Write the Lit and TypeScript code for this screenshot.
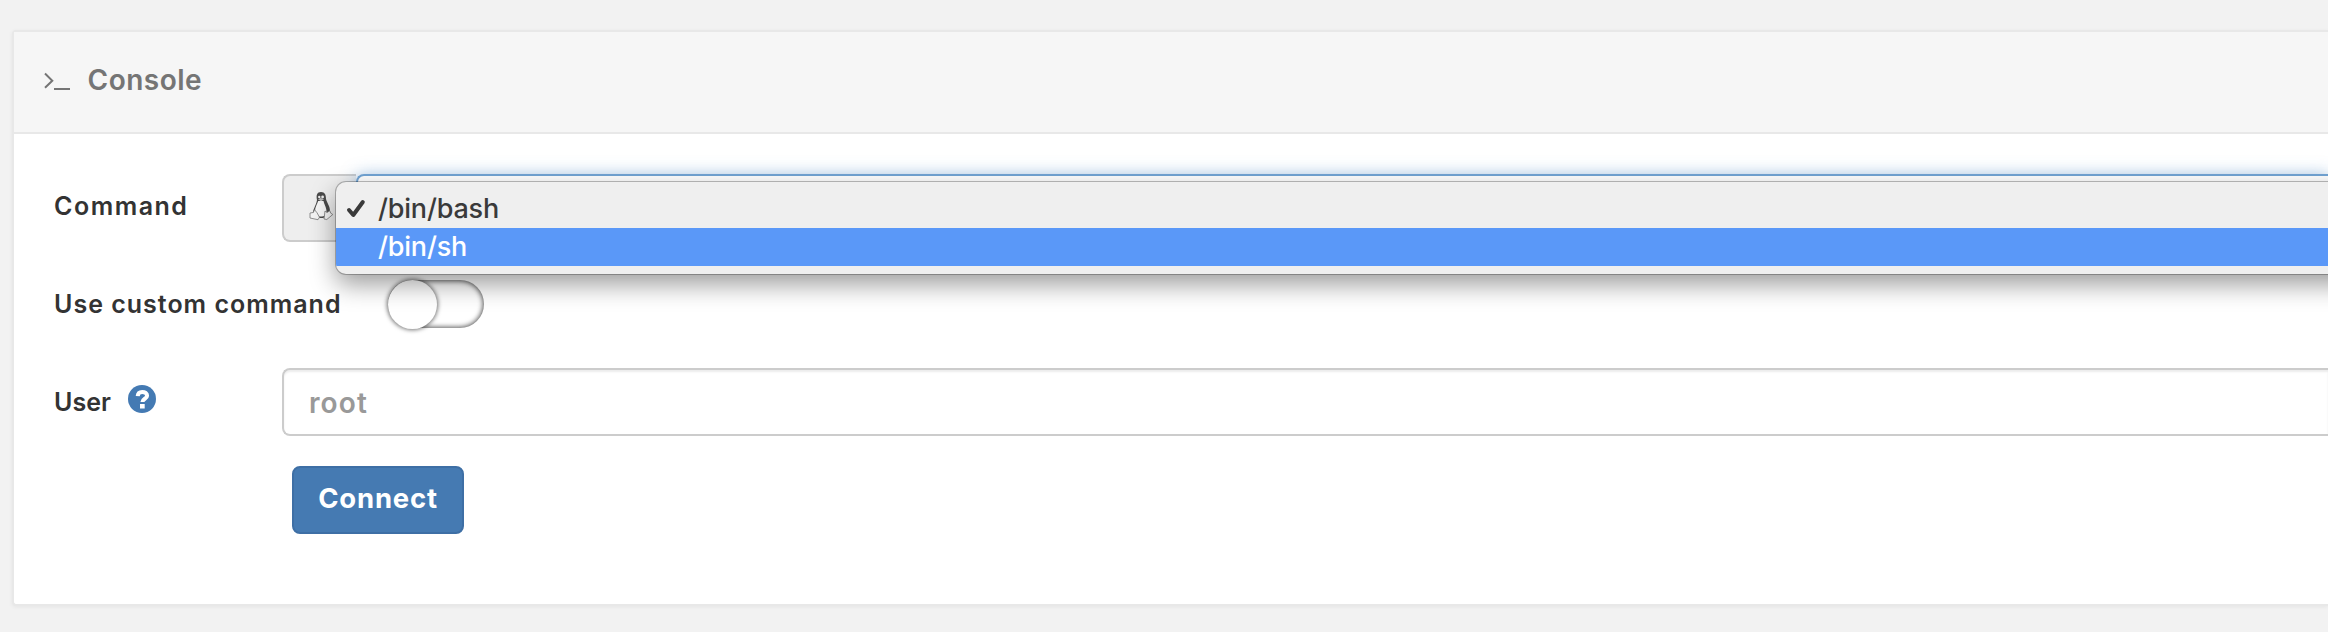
import { LitElement, html, css, svg } from "lit";
import { customElement, property } from "lit/decorators.js";

const terminal = svg`<svg class="terminal" width="28" height="20" viewBox="0 0 28 20" fill="none" stroke="#757575" stroke-width="2"><path d="M2 1.5l7.3 7.2L2 15.8M11 17H27"/></svg>`;

const tux = svg`<svg class="tux" width="24" height="30" viewBox="0 0 24 30">
<path d="M8 9C7 4 8 1 12 1s5 3 5 7c1 4 4 7 4 12l-2 5-5 2H9l-5-3c-1-5 3-9 4-15z" fill="#4a4a4a"/>
<path d="M9.2 10c-1 3-3.2 6-3.2 10 0 4 3 6 7 5.5 4-.5 5-3 4.200-7.500-.5-3-2.200-5-2.700-8z" fill="#f6f6f6"/>
<circle cx="10.300" cy="6" r="1.200" fill="#eee"/><circle cx="13.600" cy="6" r="1.400" fill="#eee"/>
<path d="M9 8.300l2.700-1.300 3.300 1.200-3 2z" fill="#bbb"/>
<path d="M1 22l3.300-.5 1.200-2.800 2.500 3 2.500 4.500-1.500 2.500-8-1.700zM16 20l2 1.500 2.800-1.800 1 2.500 2 1.300-6 5-2.800-.5z" fill="#f4f4f4" stroke="#777" stroke-width=".8"/></svg>`;

const check = svg`<svg class="check" width="20" height="20" viewBox="0 0 20 20" fill="none" stroke="#3a3a3a" stroke-width="4" stroke-linecap="round" stroke-linejoin="round"><path d="M3 11l4.300 5L16.800 3"/></svg>`;

const help = svg`<svg class="help" width="28" height="28" viewBox="0 0 28 28"><circle cx="14" cy="14" r="14" fill="#447ab3"/><path d="M9.700 11.200c.2-3 2-4.200 4.500-4.200 2.800 0 4.900 1.400 4.900 3.700 0 3-4.700 3.100-4.700 6.300" fill="none" stroke="#fff" stroke-width="4"/><rect x="12" y="19" width="4.700" height="4.500" fill="#fff"/></svg>`;

@customElement("command-menu")
export class CommandMenu extends LitElement {
  @property({ attribute: false }) options: string[] = ["/bin/bash", "/bin/sh"];
  static styles = css`
    :host { display: block; box-sizing: border-box; padding: 8px 0; background: #efefef; border-radius: 10px; overflow: hidden;
      font: 450 27px/38px Inter, sans-serif; color: #3a3a3a; box-shadow: 0 0 0 1px rgba(0,0,0,.25), 0 10px 26px rgba(0,0,0,.4); }
    .option { display: flex; align-items: center; height: 38px; box-sizing: border-box; }
    .mark { display: flex; width: 42px; padding-left: 10px; box-sizing: border-box; }
    .active { background: #5a98f8; color: #fff; }
    .name { letter-spacing: -.2px; }
  `;
  render() {
    return this.options.map((o, i) => html`<div class="option ${i === 1 ? "active" : ""}">
      <span class="mark">${i === 0 ? check : ""}</span><span class="name">${o}</span></div>`);
  }
}

@customElement("app-root")
export class AppRoot extends LitElement {
  static styles = css`
    :host { display: block; box-sizing: border-box; height: 632px; padding: 30px 0 0 12px; background: #f2f2f2; overflow: hidden; font-family: Inter, sans-serif; color: #333; }
    .panel { box-sizing: border-box; height: 576px; border: 2px solid #e8e8e8; border-right: 0; border-radius: 4px 0 0 4px; background: #fff; box-shadow: 0 1px 4px rgba(0,0,0,.06); }
    .header { display: flex; align-items: center; box-sizing: border-box; height: 102px; padding-left: 29px; background: #f6f6f6; border-bottom: 2px solid #e8e8e8; color: #757575; }
    .title { margin: -4px 0 0 16.500px; font-size: 28px; line-height: 36px; font-weight: 600; letter-spacing: .5px; }
    .terminal { margin-top: -1px; }
    .form { padding: 40px 0 0 40px; }
    .row { display: flex; align-items: center; height: 68px; }
    .row + .row { margin-top: 29px; }
    .label { width: 228px; flex: none; display: flex; align-items: center; margin-top: -5px; font-size: 25px; line-height: 32px; font-weight: 600; white-space: nowrap; letter-spacing: 1.500px; }
    .label.wide { width: 334px; margin-top: -3px; letter-spacing: 1px; }
    .label.user { margin-top: 0; letter-spacing: 0; }
    .help { margin-left: 17px; margin-top: -6px; }
    .group { position: relative; display: flex; flex: 1; height: 68px; }
    .addon { box-sizing: border-box; width: 74px; border: 2px solid #ccc; border-right: 0; border-radius: 8px 0 0 8px; background: #eee; padding: 15px 0 0 25px; }
    .select { box-sizing: border-box; flex: 1; border: 2px solid #72a4d4; border-right: 0; border-radius: 8px 0 0 8px; background: #fff; box-shadow: 0 0 16px rgba(102,160,220,.5); }
    command-menu { position: absolute; left: 54px; top: 8px; width: 2100px; height: 92px; z-index: 1; }
    .toggle { box-sizing: border-box; width: 96px; height: 48px; margin-top: -2px; border-radius: 24px; background: #fff; box-shadow: inset 0 0 5px 1px rgba(0,0,0,.65); }
    .knob { width: 49px; height: 49px; border-radius: 50%; background: #fff; box-shadow: 0 0 4px 1px rgba(0,0,0,.55); }
    .input { box-sizing: border-box; flex: 1; height: 68px; border: 2px solid #ccc; border-right: 0; border-radius: 8px 0 0 8px; padding-left: 25px; box-shadow: inset 0 2px 2px rgba(0,0,0,.075); font-size: 28px; line-height: 66px; font-weight: 600; color: #999; letter-spacing: 1.100px; }
    .connect { display: block; box-sizing: border-box; margin: 30px 0 0 238px; width: 172px; height: 68px; padding: 0 0 4px; border: 2px solid #3e6fa5; border-radius: 8px; background: #457ab2; color: #fff; font: 700 27.500px/60px Inter, sans-serif; letter-spacing: .800px; }
  `;
  render() {
    return html`<section class="panel">
      <header class="header">${terminal}<h1 class="title">Console</h1></header>
      <div class="form">
        <div class="row"><span class="label">Command</span>
          <div class="group"><span class="addon">${tux}</span><div class="select"></div><command-menu></command-menu></div></div>
        <div class="row"><span class="label wide">Use custom command</span><div class="toggle"><div class="knob"></div></div></div>
        <div class="row"><span class="label user">User ${help}</span><div class="input">root</div></div>
        <button class="connect">Connect</button>
      </div>
    </section>`;
  }
}
